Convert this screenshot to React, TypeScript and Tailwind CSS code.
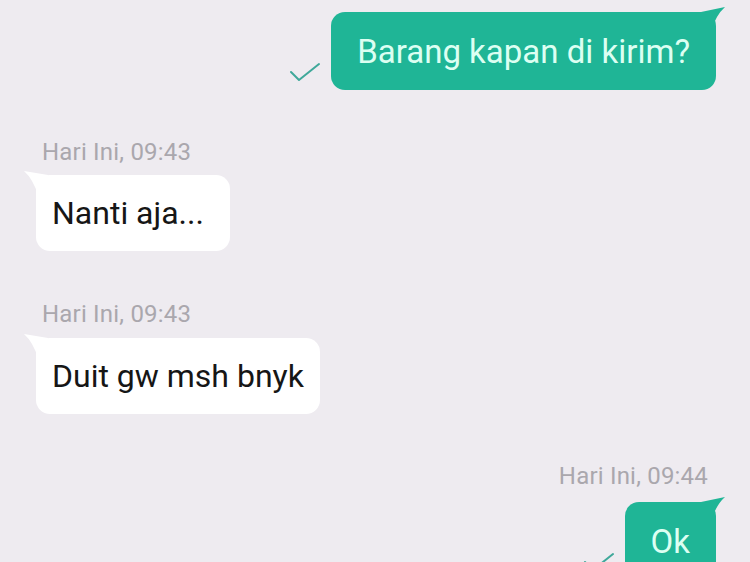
import type { ReactNode } from 'react'

function Check() {
  return (
    <svg className="h-[20px] w-[32px] text-[#3fa89a]" viewBox="0 0 32 20" fill="none" stroke="currentColor">
      <path d="M2 10l8 8L30 2" strokeWidth={2} strokeLinecap="round" strokeLinejoin="round" />
    </svg>
  )
}

function Stamp({ children, right }: { children: ReactNode; right?: boolean }) {
  return (
    <div
      className={`text-[24px] leading-[26px] tracking-[0.2px] text-[#aaa7ad] ${right ? 'self-end pr-[8px]' : 'pl-[6px]'}`}
    >
      {children}
    </div>
  )
}

function Outgoing({ text, className = '' }: { text: string; className?: string }) {
  return (
    <div className={`flex items-end gap-[10px] self-end ${className}`}>
      <div className="mb-[8px]">
        <Check />
      </div>
      <div className="relative rounded-[14px] bg-[#1fb596] px-[26px] pb-[17px] pt-[19px] text-[33px] leading-[42px] text-[#dcfff2]">
        <svg className="absolute -right-[9px] -top-[5px] h-[24px] w-[24px]" viewBox="0 0 24 24">
          <path d="M0 5 L24 0 Q15 8 10 24 L0 24 Z" fill="#1fb596" />
        </svg>
        <span className="relative">{text}</span>
      </div>
    </div>
  )
}

function Incoming({ text, pr }: { text: string; pr: string }) {
  return (
    <div
      className={`relative self-start rounded-[14px] bg-white py-[17px] pl-[16px] text-[32px] leading-[42px] text-[#161616] ${pr}`}
    >
      <svg className="absolute -left-[12px] -top-[4px] h-[24px] w-[24px]" viewBox="0 0 24 24">
        <path d="M24 4 L0 0 Q9 8 14 24 L24 24 Z" fill="#ffffff" />
      </svg>
      <span className="relative">{text}</span>
    </div>
  )
}

export default function App() {
  return (
    <div
      className="flex h-[562px] w-[750px] flex-col overflow-hidden bg-[#eeebf0] pl-[36px] pr-[34px] pt-[12px]"
      style={{ fontFamily: 'Roboto, "Noto Sans", sans-serif' }}
    >
      <Outgoing text="Barang kapan di kirim?" />
      <div className="mt-[49px]">
        <Stamp>Hari Ini, 09:43</Stamp>
      </div>
      <div className="mt-[10px] flex flex-col">
        <Incoming text="Nanti aja..." pr="pr-[26px]" />
      </div>
      <div className="mt-[50px]">
        <Stamp>Hari Ini, 09:43</Stamp>
      </div>
      <div className="mt-[11px] flex flex-col">
        <Incoming text="Duit gw msh bnyk" pr="pr-[16px]" />
      </div>
      <div className="mt-[49px] flex flex-col">
        <Stamp right>Hari Ini, 09:44</Stamp>
      </div>
      <Outgoing text="Ok" className="mt-[13px]" />
    </div>
  )
}
